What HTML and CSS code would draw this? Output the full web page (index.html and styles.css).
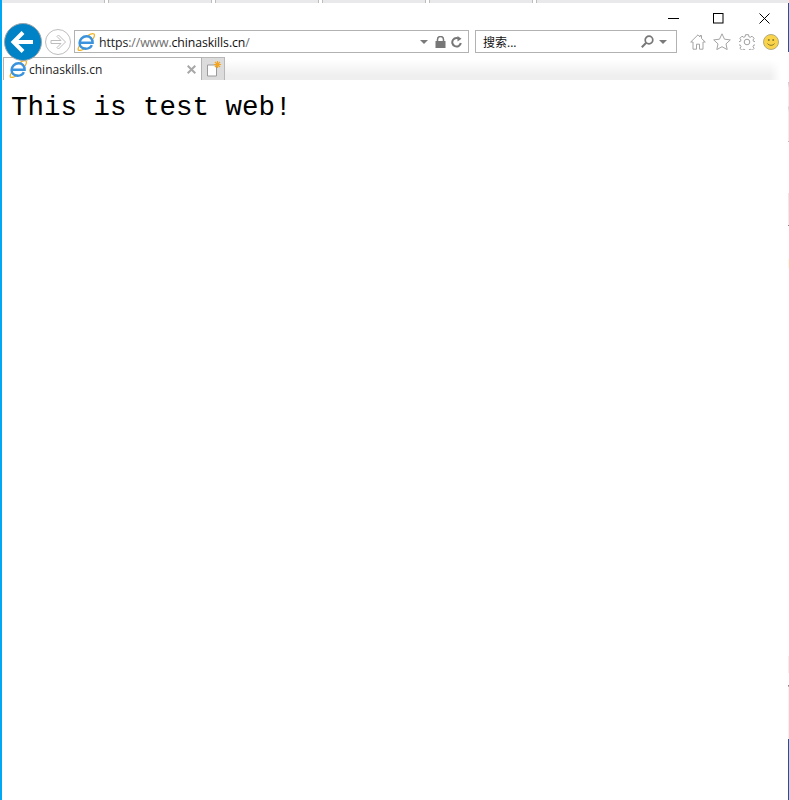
FILE: index.html
```html
<!DOCTYPE html>
<html lang="en">
<head>
<meta charset="utf-8">
<title>chinaskills.cn</title>
<link rel="stylesheet" href="styles.css">
</head>
<body>
<svg class="defs" width="0" height="0" aria-hidden="true">
  <defs>
    <symbol id="ie" viewBox="0 0 18 18">
      <path d="M2.800 12C.9 15 .6 17 2 17.400c1.500.4 4-.6 6.800-2.600" fill="none" stroke="#f0b429" stroke-width="1.300"/>
      <path d="M10.500 2.900C13.500 1 16 .3 17 1.100c.8.700.4 2.500-.9 4.700" fill="none" stroke="#f0b429" stroke-width="1.300"/>
      <path d="M3.200 9.800h12.400c.3-3.800-2.500-6.500-6-6.500-4 0-7 3-7 6.800 0 3.400 2.600 5.600 6 5.600 3 0 5.300-1.300 6.200-3.600" fill="none" stroke="#3a93dc" stroke-width="2.500"/>
    </symbol>
  </defs>
</svg>
<div class="window">
  <div class="chrome-strip"><i class="strip-sep"></i><i class="strip-sep"></i><i class="strip-sep"></i><i class="strip-sep"></i><i class="strip-sep"></i></div>

  <div class="titlebar">
    <svg class="wc wc-min" width="11" height="11" viewBox="0 0 11 11"><path d="M0 5.500h11" stroke="#000"/></svg>
    <svg class="wc wc-max" width="11" height="11" viewBox="0 0 11 11"><rect x=".5" y=".5" width="9.500" height="9.500" fill="none" stroke="#000"/></svg>
    <svg class="wc wc-close" width="11" height="11" viewBox="0 0 11 11"><path d="M.5.500l10 10M10.500.500l-10 10" stroke="#000"/></svg>
  </div>

  <div class="toolbar">
    <svg class="nav-back" width="38" height="38" viewBox="0 0 38 38">
      <circle cx="19" cy="19" r="18.500" fill="#0083c6" stroke="#9aa4aa"/>
      <path d="M19 9.500 9.500 19l9.500 9.500M11 19h18" fill="none" stroke="#fff" stroke-width="4"/>
    </svg>
    <svg class="nav-forward" width="26" height="26" viewBox="0 0 26 26">
      <circle cx="13" cy="13" r="12.500" fill="#fff" stroke="#bdbdbd"/>
      <path d="M13.500 6 20.500 13l-7 7-1.500-1.500 4-4H6v-3h10l-4-4z" fill="#fff" stroke="#bdbdbd"/>
    </svg>
    <div class="address">
      <svg class="favicon" width="18" height="18"><use href="#ie"/></svg>
      <span class="url"><span class="url-dark">https</span><span class="url-dim">://www.</span>chinaskills.cn<span class="url-dim">/</span></span>
      <svg class="caret caret-addr" width="8" height="4" viewBox="0 0 8 4"><path d="M0 0h8L4 4z" fill="#7a7a7a"/></svg>
      <svg class="lock" width="11" height="12" viewBox="0 0 11 12"><path d="M2.500 5V3.500a3 3 0 0 1 6 0V5" fill="none" stroke="#777" stroke-width="1.500"/><rect x=".5" y="5" width="10" height="7" fill="#777"/></svg>
      <svg class="refresh" width="11" height="12" viewBox="0 0 11 12"><path d="M8.800 3.400A4.300 4.300 0 1 0 9.800 7" fill="none" stroke="#777" stroke-width="2"/><path d="M6.500 0v5.500l4-2.700z" fill="#777"/></svg>
    </div>
    <div class="search">
      <span class="search-text">搜索...</span>
      <svg class="magnifier" width="13" height="13" viewBox="0 0 13 13"><circle cx="8" cy="5" r="3.800" fill="none" stroke="#777" stroke-width="1.700"/><path d="M5.200 7.800.8 12.200" stroke="#777" stroke-width="2"/></svg>
      <svg class="caret" width="8" height="4" viewBox="0 0 8 4"><path d="M0 0h8L4 4z" fill="#7a7a7a"/></svg>
    </div>
    <div class="tools">
      <svg width="16" height="16" viewBox="0 0 16 16"><path d="M8 .8.700 8h2.300v7.200h3.500v-5h3v5h3.500V8h2.300L11.500 4.500V1.500H10v1.500z" fill="#fff" stroke="#a4a4a4"/></svg>
      <svg width="18" height="17" viewBox="0 0 18 17"><path d="M9 .8l2.500 5.400 5.800.7-4.300 4 1.200 5.700L9 13.700l-5.200 2.900L5 10.900.7 6.900l5.800-.7z" fill="#fff" stroke="#a4a4a4"/></svg>
      <svg class="gear" width="16" height="16" viewBox="0 0 16 16"><path d="M6.500.7h3l.4 2 1.400.6 1.700-1.100 2.100 2.100-1.100 1.700.6 1.400 2 .4v3l-2 .4-.6 1.400 1.100 1.700-2.100 2.100-1.700-1.100-1.400.6-.4 2h-3l-.4-2-1.400-.6-1.700 1.100-2.100-2.100 1.100-1.700-.6-1.400-2-.4v-3l2-.4.6-1.400-1.100-1.700 2.100-2.100 1.700 1.100 1.400-.6z" fill="#fff" stroke="#a0a0a0"/><circle cx="8" cy="8" r="2.800" fill="#fff" stroke="#a0a0a0"/></svg>
      <svg class="smiley" width="16" height="16" viewBox="0 0 16 16"><circle cx="8" cy="8" r="7.500" fill="#f9d349" stroke="#b5ab7d"/><circle cx="5.800" cy="6" r="1" fill="#8a7a30"/><circle cx="10.200" cy="6" r="1" fill="#8a7a30"/><path d="M4.500 9.500c1.500 2.400 5.500 2.400 7 0" fill="none" stroke="#8a7a30"/></svg>
    </div>
  </div>

  <div class="tabrow">
    <div class="tab">
      <svg class="favicon" width="18" height="18"><use href="#ie"/></svg>
      <span class="tab-title">chinaskills.cn</span>
      <svg class="tab-close" width="9" height="9" viewBox="0 0 9 9"><path d="M.7.700l7.600 7.600M8.300.700.700 8.300" stroke="#a8a8a8" stroke-width="2"/></svg>
    </div>
    <div class="newtab">
      <svg width="16" height="16" viewBox="0 0 16 16"><path d="M1.500 4h9v11h-9z" fill="#fff" stroke="#9a9a9a"/><path d="M11.500 0v7M8 3.500h7M9 1l5 5M14 1 9 6" stroke="#f4a51d" stroke-width="1.200"/></svg>
    </div>
    <div class="tab-fill"></div>
  </div>

  <main class="page">
    <p class="headline">This is test web!</p>
  </main>

  <i class="edge edge-top"></i>
  <i class="edge edge-a"></i>
  <i class="edge edge-b"></i>
  <i class="edge edge-c"></i>
  <i class="edge edge-d"></i>
  <i class="edge edge-e"></i>
  <i class="edge edge-bottom"></i>
</div>
</body>
</html>
```

FILE: styles.css
```css
* {
  box-sizing: border-box;
}

html,
body {
  margin: 0;
  height: 100%;
  background: #fff;
}

body {
  overflow: hidden;
  font-family: "Open Sans", "Noto Sans", "Noto Sans CJK SC", sans-serif;
}

.defs {
  position: absolute;
}

.window {
  position: relative;
  display: flex;
  flex-direction: column;
  height: 800px;
  border-left: 2px solid #00a8f4;
}

svg {
  display: block;
  flex: none;
}

.chrome-strip {
  display: flex;
  height: 3px;
  padding-left: 102px;
  padding-right: 1px;
  background: #e9e9ec;
}

.strip-sep {
  width: 5px;
  margin-right: 102px;
  border-left: 1px solid #bdbdbd;
  border-right: 1px solid #bdbdbd;
  background: #fff;
}

.titlebar {
  display: flex;
  align-items: center;
  height: 27px;
  padding-top: 3px;
  padding-left: 666px;
}

.wc-max {
  margin-left: 34px;
}

.wc-close {
  margin-left: 35px;
}

.toolbar {
  display: flex;
  align-items: center;
  height: 23px;
  padding-left: 2px;
}

.nav-back {
  margin-top: 1px;
  position: relative;
  z-index: 1;
}

.nav-forward {
  margin-left: 3px;
  margin-top: 1px;
}

.address,
.search {
  display: flex;
  align-items: center;
  height: 23px;
  border: 1px solid #b2b2b2;
  background: #fff;
}

.address {
  width: 395px;
  margin-left: 3px;
  padding-left: 2px;
}

.url {
  margin-left: 4px;
  padding-top: 2px;
  font-size: 12.300px;
  letter-spacing: -.1px;
  color: #111;
  white-space: nowrap;
}

.url-dark {
  color: #222;
}

.url-dim {
  color: #6e6e6e;
}

.caret-addr {
  margin-left: auto;
}

.lock {
  margin-left: 7px;
}

.refresh {
  margin-left: 5px;
  margin-right: 6px;
}

.search {
  width: 202px;
  margin-left: 6px;
  padding-left: 7px;
}

.search-text {
  padding-top: 1px;
  font-size: 12px;
  color: #111;
}

.magnifier {
  margin-left: auto;
  margin-right: 5px;
}

.search .caret {
  margin-right: 9px;
}

.tools {
  display: flex;
  align-items: center;
  gap: 7px;
  margin-left: 13px;
}

.gear {
  margin-left: 1px;
}

.smiley {
  margin-left: 1px;
}

.tabrow {
  display: flex;
  height: 23px;
  margin-top: 4px;
  padding-left: 1px;
}

.tab {
  display: flex;
  align-items: center;
  width: 199px;
  padding-left: 5px;
  border: 1px solid #b2b2b2;
  border-bottom: 0;
  background: #fff;
}

.tab-title {
  margin-left: 2px;
  font-size: 12px;
  color: #222;
}

.tab-close {
  margin-left: auto;
  margin-right: 5px;
}

.newtab {
  display: flex;
  align-items: center;
  justify-content: center;
  width: 23px;
  padding-left: 2px;
  border: 1px solid #b8b8b8;
  border-left: 0;
  border-bottom: 0;
  background: #dcdcdc;
}

.tab-fill {
  width: 556px;
  margin-top: 3px;
  background: linear-gradient(to bottom, #fff, #efefef 75%);
  -webkit-mask-image: linear-gradient(to right, #000 98%, transparent);
  mask-image: linear-gradient(to right, #000 98%, transparent);
}

.page {
  flex: 1;
  padding-left: 9px;
}

.headline {
  margin: 9px 0 0;
  font-family: "Liberation Mono", monospace;
  font-size: 27.500px;
  line-height: 38px;
  color: #000;
  white-space: nowrap;
}

.edge {
  position: absolute;
  left: 786px;
  width: 1px;
}

.edge-top {
  top: 3px;
  height: 49px;
  background: #1159ad;
}

.edge-a {
  top: 82px;
  height: 60px;
  background: linear-gradient(to bottom, #c5ccd4, #efefef 10%, #efefef 40%, #d0d4d8 42%, #eee 50%, #eee 98%, #999);
}

.edge-b {
  top: 193px;
  height: 33px;
  background: linear-gradient(to bottom, #e8e8e8, #eee 96%, #444);
}

.edge-c {
  top: 259px;
  height: 9px;
  background: #fdfbd8;
}

.edge-d {
  top: 656px;
  height: 17px;
  background: #eeeeee;
}

.edge-e {
  top: 685px;
  height: 54px;
  background: linear-gradient(to bottom, #888 2%, #f4f4f4 4%, #f0f0f0);
}

.edge-bottom {
  top: 739px;
  height: 61px;
  background: #0a5bb0;
}
```
